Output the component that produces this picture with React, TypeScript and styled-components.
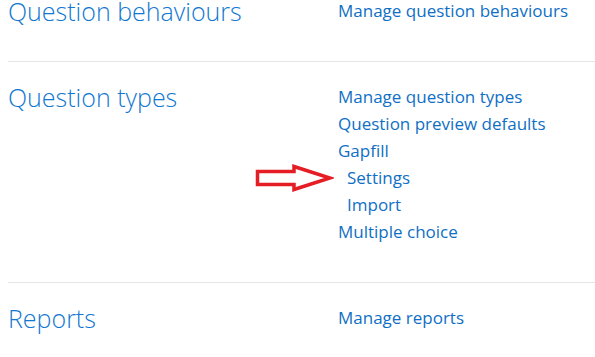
import React from "react";
import styled, { createGlobalStyle } from "styled-components";

const GlobalStyle = createGlobalStyle`
  html, body {
    margin: 0;
    padding: 0;
    background: #ffffff;
    overflow: hidden;
  }
  body {
    font-family: "Open Sans", "Noto Sans", sans-serif;
  }
`;

const Page = styled.div`
  width: 595px;
  height: 357px;
  overflow: hidden;
`;

/* page is scrolled a little, so the first section is cut at the top */
const Scroller = styled.div`
  margin-top: -24px;
  padding-left: 8px;
`;

const Section = styled.section`
  display: grid;
  grid-template-columns: 330px 1fr;
  align-items: start;
  padding: 21px 0 37px;
  border-bottom: 1px solid #e5e5e5;
`;

const Heading = styled.h2`
  margin: 0;
  padding-top: 2px;
  font-size: 25px;
  font-weight: 300;
  line-height: 25px;
  color: #1177d1;
  white-space: nowrap;
`;

const LinkList = styled.ul`
  list-style: none;
  margin: 0;
  padding: 0;
`;

const Item = styled.li<{ $indent?: boolean }>`
  position: relative;
  padding-left: ${(p) => (p.$indent ? "9px" : "0")};
  font-size: 17px;
  line-height: 27px;
  white-space: nowrap;
`;

const Link = styled.a`
  color: #0f6fc5;
  text-decoration: none;
  cursor: pointer;
`;

const Pointer = styled.svg`
  position: absolute;
  left: -84px;
  top: 0;
`;

const RedArrow = () => (
  <Pointer width="80" height="28" viewBox="0 0 80 28">
    <polygon
      points="3.5,7.5 40,7.5 40,2.5 76,14 40,25.5 40,20.5 3.5,20.5"
      fill="none"
      stroke="#e51d24"
      strokeWidth="3.5"
      strokeLinejoin="miter"
    />
  </Pointer>
);

type LinkItem = { label: string; indent?: boolean; marked?: boolean };

const sections: { title: string; links: LinkItem[] }[] = [
  {
    title: "Question behaviours",
    links: [{ label: "Manage question behaviours" }],
  },
  {
    title: "Question types",
    links: [
      { label: "Manage question types" },
      { label: "Question preview defaults" },
      { label: "Gapfill" },
      { label: "Settings", indent: true, marked: true },
      { label: "Import", indent: true },
      { label: "Multiple choice" },
    ],
  },
  {
    title: "Reports",
    links: [{ label: "Manage reports" }],
  },
];

const App: React.FC = () => {
  return (
    <Page>
      <GlobalStyle />
      <Scroller>
        {sections.map((s) => (
          <Section key={s.title}>
            <Heading>{s.title}</Heading>
            <LinkList>
              {s.links.map((l) => (
                <Item key={l.label} $indent={l.indent}>
                  {l.marked && <RedArrow />}
                  <Link>{l.label}</Link>
                </Item>
              ))}
            </LinkList>
          </Section>
        ))}
      </Scroller>
    </Page>
  );
};

export default App;
